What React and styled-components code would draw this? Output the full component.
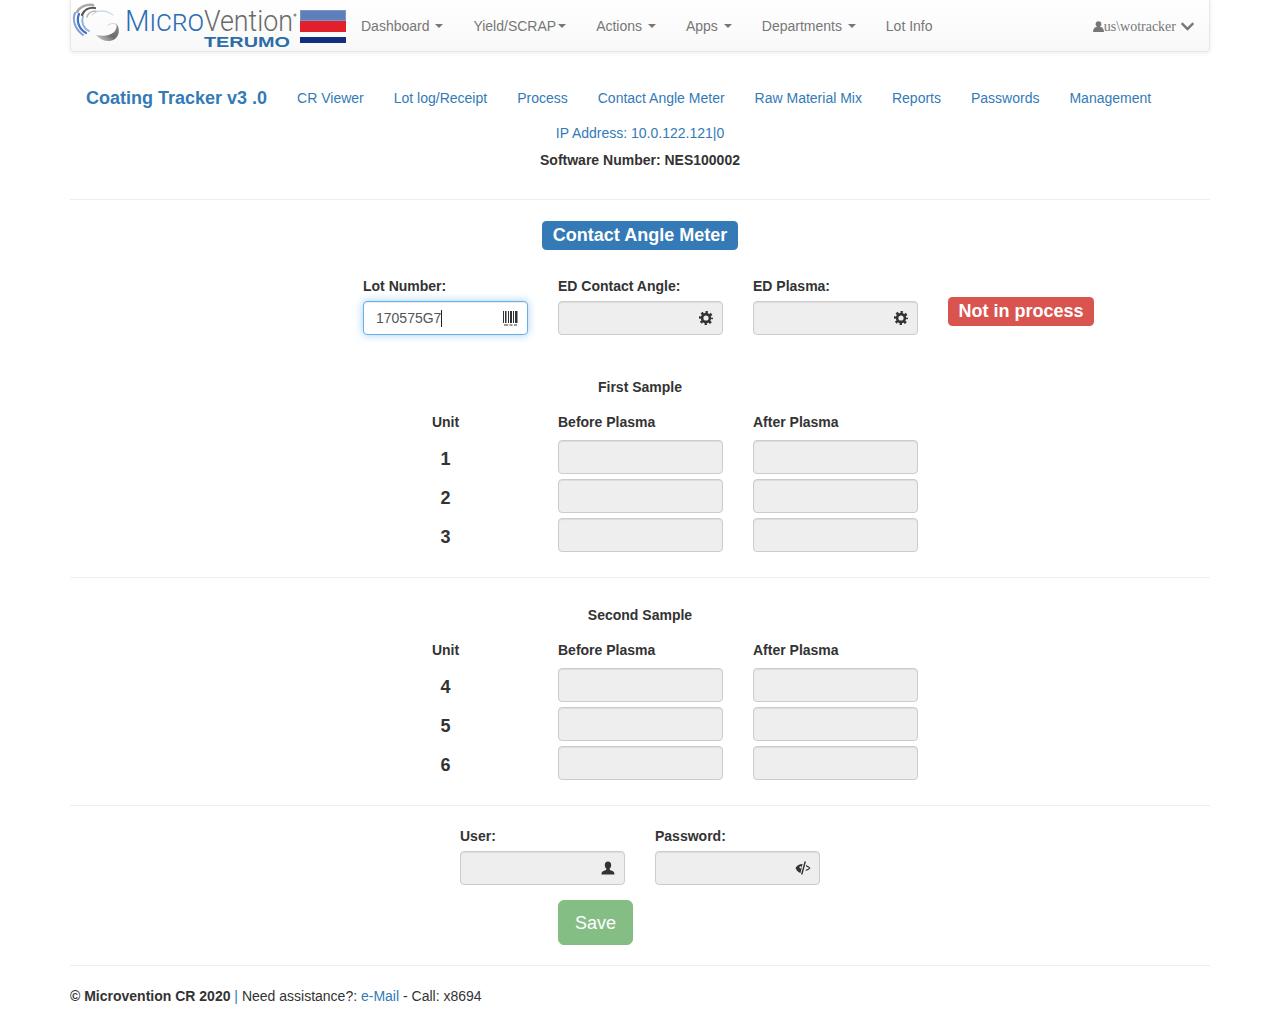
import React from "react";
import styled, { createGlobalStyle } from "styled-components";
import { FaChevronDown } from "react-icons/fa";

const Global = createGlobalStyle`
  html, body { margin: 0; padding: 0; background: #fff; }
  body { font-family: "Liberation Sans", Arial, sans-serif; font-size: 14px; line-height: 20px; color: #333; }
  * { box-sizing: border-box; }
`;

const Page = styled.div`
  width: 1140px;
  margin: 0 auto;
`;
const Navbar = styled.nav`
  height: 52px;
  display: flex;
  align-items: center;
  border: 1px solid #e7e7e7;
  border-top: none;
  border-radius: 0 0 4px 4px;
  background: linear-gradient(to bottom, #fff 0%, #f8f8f8 100%);
  box-shadow: 0 1px 5px rgba(0, 0, 0, 0.08);
`;
const Brand = styled.div`
  width: 276px;
  height: 50px;
  margin-right: 14px;
  flex: none;
`;
const TopLink = styled.a`
  display: flex;
  align-items: center;
  color: #777;
  margin-right: 30px;
  white-space: pre;
`;
const Caret = styled.span`
  display: inline-block;
  width: 0;
  height: 0;
  margin-left: ${(p) => p.$gap}px;
  margin-top: 1px;
  border-top: 4px solid #777;
  border-left: 4px solid transparent;
  border-right: 4px solid transparent;
`;
const UserMenu = styled.div`
  margin-left: auto;
  margin-right: 14px;
  padding-top: 2px;
  display: flex;
  align-items: center;
  color: #777;
  font-family: "Liberation Serif", serif;
  font-size: 14px;
  svg { flex: none; }
`;
const SubNav = styled.div`
  display: flex;
  align-items: center;
  height: 50px;
  margin-top: 21px;
  padding-left: 16px;
  gap: 30px;
`;
const Title = styled.a`
  color: #337ab7;
  font-size: 18px;
  font-weight: 700;
`;
const SubLink = styled.a`
  color: #337ab7;
`;
const Ip = styled.div`
  text-align: center;
  color: #337ab7;
  height: 20px;
`;
const Software = styled.div`
  text-align: center;
  font-weight: 700;
  margin-top: 7px;
  height: 20px;
`;
const Rule = styled.hr`
  border: none;
  border-top: 1px solid #eee;
  margin: ${(p) => p.$top}px 0 0;
  height: 0;
`;
const Heading = styled.div`
  display: flex;
  justify-content: center;
  margin-top: 21px;
`;
const Badge = styled.span`
  display: inline-block;
  padding: 4px 10.5px;
  height: 29px;
  line-height: 21px;
  font-size: 18px;
  font-weight: 700;
  color: #fff;
  border-radius: 4.5px;
  background: ${(p) => p.$bg};
  white-space: nowrap;
`;
const Columns = styled.div`
  display: grid;
  grid-template-columns: repeat(${(p) => p.$cols || 4}, 165px);
  column-gap: 30px;
  padding-left: ${(p) => p.$left}px;
  margin-top: ${(p) => p.$top || 0}px;
`;
const Label = styled.label`
  display: block;
  font-weight: 700;
  height: 15px;
  line-height: 15px;
  margin-bottom: 7px;
`;
const FieldLabelled = styled.div`
  display: flex;
  flex-direction: column;
`;
const Field = styled.div`
  height: 34px;
  display: flex;
  align-items: center;
  padding: 0 5px 0 12px;
  border: 1px solid ${(p) => (p.$focus ? "#66afe9" : "#ccc")};
  border-radius: 4px;
  background: ${(p) => (p.$focus ? "#fff" : "#eee")};
  box-shadow: ${(p) =>
    p.$focus
      ? "inset 0 1px 1px rgba(0,0,0,.075), 0 0 8px rgba(102,175,233,.6)"
      : "inset 0 1px 1px rgba(0,0,0,.075)"};
  color: #555;
  svg { flex: none; margin-left: auto; margin-right: ${(p) => p.$iconGap ?? 4}px; color: #333; }
`;
const FieldInput = styled.input`
  flex: 1;
  min-width: 0;
  border: none;
  outline: none;
  background: transparent;
  padding: 0;
  font: inherit;
`;
const CaretBar = styled.span`
  display: inline-block;
  width: 1px;
  height: 17px;
  background: #222;
`;
const StatusCell = styled.div`
  padding-top: 18px;
`;
const SampleTitle = styled.div`
  text-align: center;
  font-weight: 700;
  height: 20px;
  margin-top: ${(p) => p.$top}px;
`;
const UnitHead = styled.div`
  font-weight: 700;
  text-align: ${(p) => (p.$center ? "center" : "left")};
  height: 20px;
`;
const UnitRows = styled.div`
  display: grid;
  grid-template-columns: repeat(3, 165px);
  column-gap: 30px;
  row-gap: 5px;
  padding-left: 293px;
  margin-top: 8px;
`;
const UnitNum = styled.div`
  height: 34px;
  display: flex;
  align-items: center;
  justify-content: center;
  font-size: 18px;
  font-weight: 700;
  padding-top: 4px;
`;
const SaveRow = styled.div`
  padding-left: 488px;
  margin-top: 15px;
`;
const SaveButton = styled.button`
  width: 75px;
  height: 45px;
  border: 1px solid #82bd82;
  border-radius: 6px;
  background: #85be85;
  color: #fff;
  font: 18px/24px "Liberation Sans", Arial, sans-serif;
  padding: 0;
`;
const Footer = styled.footer`
  margin-top: 20px;
  height: 20px;
`;
const FooterStrong = styled.strong`
  font-weight: 700;
`;
const FooterBar = styled.span`
  color: #337ab7;
`;
const FooterLink = styled.a`
  color: #337ab7;
`;

const LOGO_FONT = "Roboto, Liberation Sans, sans-serif";

const Logo = () => (
  <svg width="276" height="50" viewBox="0 0 276 50">
    <defs>
      <linearGradient id="crescent" x1="0" y1="1" x2="1" y2="0">
        <stop offset="0" stopColor="#dcdcdc" />
        <stop offset="0.5" stopColor="#6b6b6b" />
        <stop offset="1" stopColor="#8f8f8f" />
      </linearGradient>
    </defs>
    <g fill="none" strokeLinecap="round">
      <path d="M4 12C1 19 4 28 12 34" stroke="#7fa0d8" strokeWidth="2" />
      <path d="M8 13C5 20 8 28 15 32" stroke="#3f72c4" strokeWidth="2.200" />
      <path d="M12 15C10 21 12 27 18 30" stroke="#8fb0e0" strokeWidth="1.800" />
      <path d="M6 11C9 6 15 3 22 4" stroke="#a9a9a9" strokeWidth="2.600" />
      <path d="M11 14C13 9 18 6 24 7" stroke="#555" strokeWidth="2.200" />
      <path d="M16 16C17 12 21 10 25 10" stroke="#b5b5b5" strokeWidth="1.500" />
      <path d="M21 14C26 8 36 9 42 14" stroke="#b5cbe8" strokeWidth="1" />
      <path d="M37 24C44 20 47 24 46 28" stroke="#d5d5d5" strokeWidth="1" />
    </g>
    <path d="M25 34c9 2 18 0 20-6 1-2 1-4 0-6 4 5 4 12-1 16-6 4-14 2-19-4z" fill="url(#crescent)" />
    <text x="54" y="30" fontFamily={LOGO_FONT} fontWeight="300" fontSize="29" fontVariant="small-caps" fill="#2f6db3" textLength="79" lengthAdjust="spacingAndGlyphs">Micro</text>
    <text x="133" y="30" fontFamily={LOGO_FONT} fontWeight="300" fontSize="29" fill="#6a6a6a" textLength="89" lengthAdjust="spacingAndGlyphs">Vention</text>
    <circle cx="224" cy="14" r="1.500" fill="#8a8a8a" />
    <text x="133" y="45.500" fontFamily="Liberation Sans, Arial, sans-serif" fontSize="15" fontWeight="700" fill="#2d6da6" textLength="86" lengthAdjust="spacingAndGlyphs">TERUMO</text>
    <rect x="229.500" y="9.500" width="45" height="10" fill="#5f7fbc" stroke="#7f95c4" />
    <rect x="229" y="20" width="46" height="11" fill="#e2202b" />
    <rect x="229" y="36" width="46" height="6" fill="#12307f" />
  </svg>
);

const Cog = () => (
  <svg width="14" height="14" viewBox="0 0 14 14" fill="none" stroke="#333">
    <circle cx="7" cy="7" r="3.900" strokeWidth="2.600" />
    <circle cx="7" cy="7" r="5.800" strokeWidth="2.400" strokeDasharray="2.350 2.205" strokeDashoffset="1.175" />
  </svg>
);

const Barcode = () => (
  <svg width="15" height="15" viewBox="0 0 15 15" fill="#333">
    <rect x="0" y="0" width="1" height="12" />
    <rect x="2" y="0" width="1.500" height="12" />
    <rect x="5" y="0" width="1" height="12" />
    <rect x="7" y="0" width="2" height="12" />
    <rect x="10" y="0" width="1" height="12" />
    <rect x="12" y="0" width="2.500" height="12" />
    <rect x="1" y="13.500" width="4" height="1" />
    <rect x="6.500" y="13.500" width="3" height="1" />
    <rect x="11" y="13.500" width="3" height="1" />
  </svg>
);

const Person = () => (
  <svg width="14" height="14" viewBox="0 0 14 14" fill="#333">
    <path d="M7 .5C5 .5 3.800 2 3.800 4c0 1.500.6 3 1.600 3.800 0 .9-.3 1.200-1 1.500C3 9.700.5 10.300.5 13.500h13c0-3.200-2.500-3.800-3.900-4.200-.7-.3-1-.6-1-1.500 1-.8 1.600-2.300 1.600-3.800C10.200 2 9 .5 7 .5z" />
  </svg>
);

const EyeOff = () => (
  <svg width="16" height="14" viewBox="0 0 16 14" fill="#333">
    <path fillRule="evenodd" d="M.5 7C2 4.500 4.500 3 7.500 3L5.500 12C3.300 11.300 1.500 9.500.5 7zM5.500 5.200a1.100 1.100 0 1 0 0 2.200 1.100 1.100 0 0 0 0-2.200z" />
    <path d="M9.500.5 6 13.500h1.500L11 .5z" />
    <path d="M11 4c1.800.7 3.300 1.700 4.500 3-1.200 1.500-3 2.600-5 3.100l.6-1.500c1.200-.4 2.200-.9 3-1.600-.8-.7-1.900-1.300-3-1.600z" />
  </svg>
);

const NavUser = () => (
  <svg width="11" height="11" viewBox="0 0 14 14" fill="#777">
    <circle cx="7" cy="4" r="3.600" />
    <path d="M0 14c0-4 2-6.500 4.500-6.500h5C12 7.500 14 10 14 14z" />
  </svg>
);

const topLinks = [
  ["Dashboard ", 6],
  ["Yield/SCRAP", 2],
  ["Actions ", 6],
  ["Apps ", 6],
  ["Departments ", 6],
];
const subLinks = ["CR Viewer", "Lot log/Receipt", "Process", "Contact Angle Meter", "Raw Material Mix", "Reports", "Passwords", "Management"];

const Sample = ({ title, top, units }) => (
  <>
    <SampleTitle $top={top}>{title}</SampleTitle>
    <Columns $cols={3} $left={293} $top={15}>
      <UnitHead $center>Unit</UnitHead>
      <UnitHead>Before Plasma</UnitHead>
      <UnitHead>After Plasma</UnitHead>
    </Columns>
    <UnitRows>
      {units.map((u) => (
        <React.Fragment key={u}>
          <UnitNum>{u}</UnitNum>
          <Field><FieldInput disabled /></Field>
          <Field><FieldInput disabled /></Field>
        </React.Fragment>
      ))}
    </UnitRows>
  </>
);

export default function App() {
  return (
    <Page>
      <Global />
      <Navbar>
        <Brand><Logo /></Brand>
        {topLinks.map(([t, g]) => (
          <TopLink key={t}>{t}<Caret $gap={g - (t.endsWith(" ") ? 4 : 0)} /></TopLink>
        ))}
        <TopLink>Lot Info</TopLink>
        <UserMenu>
          <NavUser />us\wotracker
          <FaChevronDown size={15} style={{ marginLeft: 4 }} />
        </UserMenu>
      </Navbar>
      <SubNav>
        <Title>Coating Tracker v3 .0</Title>
        {subLinks.map((l) => <SubLink key={l}>{l}</SubLink>)}
      </SubNav>
      <Ip>IP Address: 10.0.122.121|0</Ip>
      <Software>Software Number: NES100002</Software>
      <Rule $top={29} />
      <Heading><Badge $bg="#337ab7">Contact Angle Meter</Badge></Heading>
      <Columns $left={293} $top={29}>
        <FieldLabelled>
          <Label>Lot Number:</Label>
          <Field $focus>170575G7<CaretBar /><Barcode /></Field>
        </FieldLabelled>
        <FieldLabelled>
          <Label>ED Contact Angle:</Label>
          <Field><FieldInput disabled /><Cog /></Field>
        </FieldLabelled>
        <FieldLabelled>
          <Label>ED Plasma:</Label>
          <Field><FieldInput disabled /><Cog /></Field>
        </FieldLabelled>
        <StatusCell><Badge $bg="#d9534f">Not in process</Badge></StatusCell>
      </Columns>
      <Sample title="First Sample" top={42} units={[1, 2, 3]} />
      <Rule $top={25} />
      <Sample title="Second Sample" top={27} units={[4, 5, 6]} />
      <Rule $top={25} />
      <Columns $cols={2} $left={390} $top={23}>
        <FieldLabelled>
          <Label>User:</Label>
          <Field><FieldInput disabled /><Person /></Field>
        </FieldLabelled>
        <FieldLabelled>
          <Label>Password:</Label>
          <Field $iconGap={3}><FieldInput disabled /><EyeOff /></Field>
        </FieldLabelled>
      </Columns>
      <SaveRow><SaveButton disabled>Save</SaveButton></SaveRow>
      <Rule $top={20} />
      <Footer>
        <FooterStrong>© Microvention CR 2020</FooterStrong> <FooterBar>|</FooterBar> Need assistance?: <FooterLink>e-Mail</FooterLink> - Call: x8694
      </Footer>
    </Page>
  );
}
